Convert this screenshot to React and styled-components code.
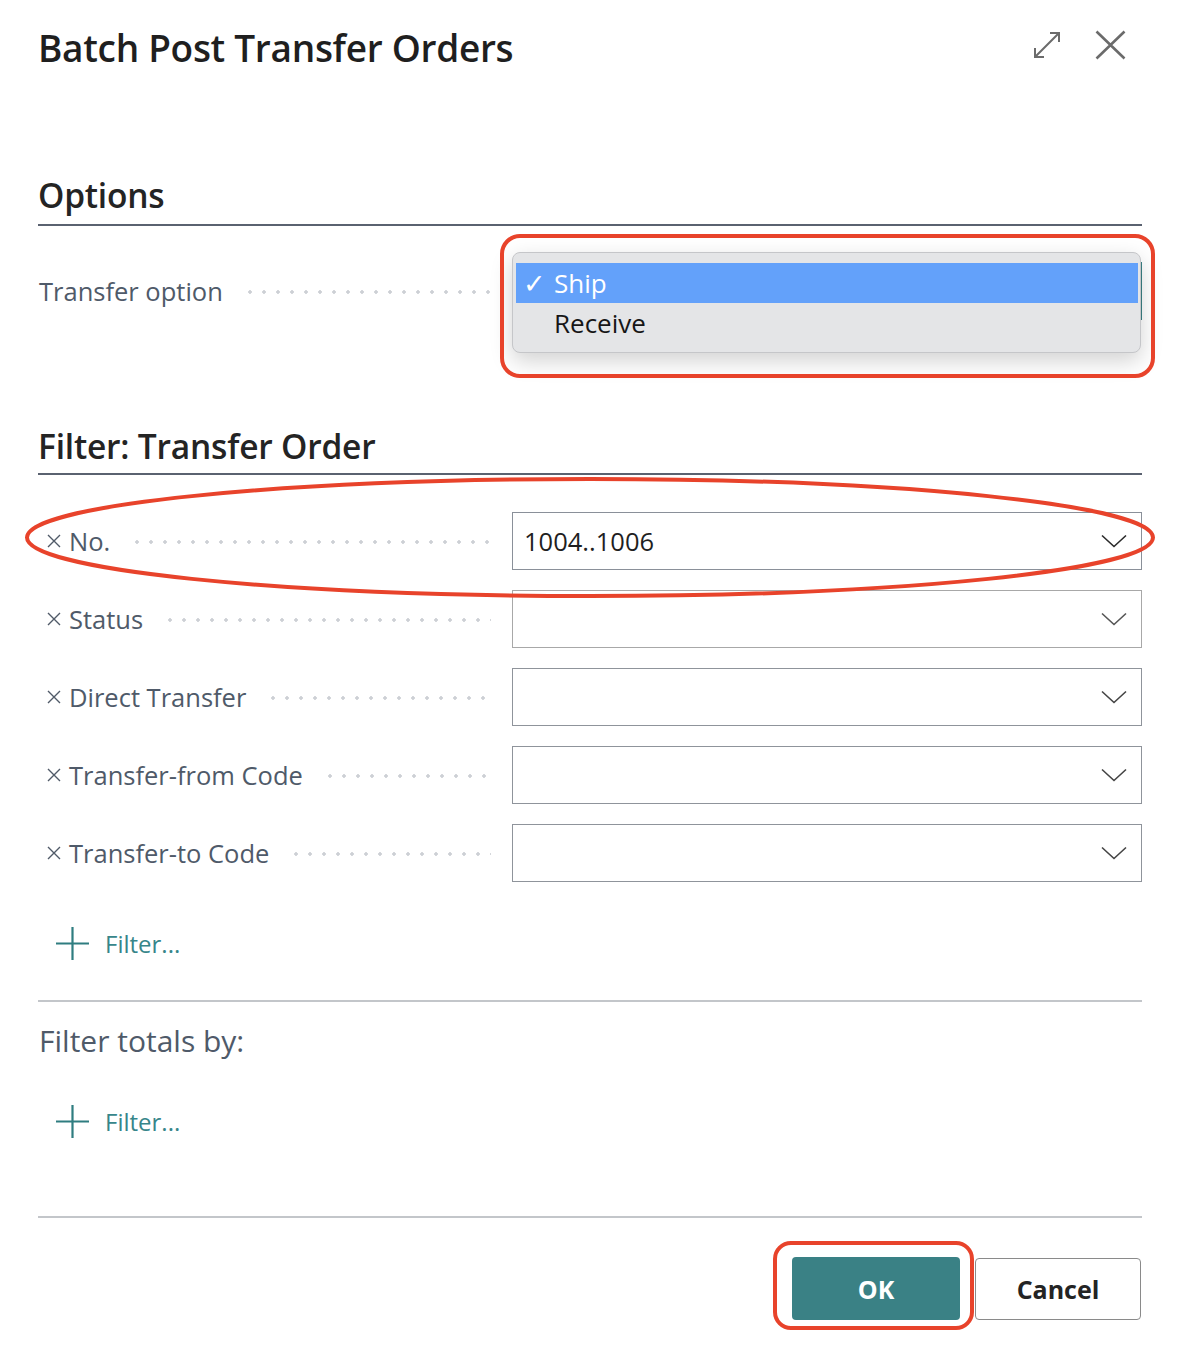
import React from "react";
import styled, { createGlobalStyle } from "styled-components";

const GlobalStyle = createGlobalStyle`
  html, body {
    margin: 0;
    padding: 0;
    background: #ffffff;
  }
  body {
    font-family: "Open Sans", "Noto Sans", sans-serif;
    color: #242424;
  }
  * {
    box-sizing: border-box;
  }
`;

const Dialog = styled.div`
  position: relative;
  width: 1184px;
  height: 1360px;
  padding: 0 42px 0 38px;
  display: flex;
  flex-direction: column;
`;

const Header = styled.header`
  height: 96px;
  display: flex;
  align-items: flex-start;
  justify-content: space-between;
`;

const Title = styled.h1`
  margin: 24px 0 0 0;
  font-size: 37px;
  line-height: 48px;
  font-weight: 600;
  color: #1f1f1f;
  letter-spacing: -0.3px;
`;

const HeaderActions = styled.div`
  display: flex;
  align-items: center;
  gap: 34px;
  margin: 30px 16px 0 0;
  color: #6b6b6b;
`;

const IconButton = styled.button`
  border: 0;
  background: none;
  padding: 0;
  display: flex;
  color: inherit;
`;

const SectionTitle = styled.h2`
  margin: ${(p) => p.$gap}px 0 0;
  height: ${(p) => 48 + p.$pad + 2}px;
  padding: 0 0 ${(p) => p.$pad}px 0;
  font-size: 33.5px;
  line-height: 48px;
  font-weight: 600;
  color: #242424;
  letter-spacing: -0.2px;
  border-bottom: 2px solid #5a6270;
`;

const FieldRow = styled.div`
  position: relative;
  display: grid;
  grid-template-columns: 453px 630px;
  column-gap: 21px;
  align-items: center;
  height: 58px;
  margin-top: ${(p) => p.$gap}px;
`;

const LabelCell = styled.div`
  display: flex;
  align-items: center;
  height: 100%;
  padding-left: ${(p) => (p.$removable ? 8 : 1)}px;
`;

const RemoveMark = styled.span`
  display: flex;
  width: 16px;
  margin-right: 7px;
  color: #505a68;
`;

const Label = styled.span`
  font-size: 25.5px;
  color: #4f5a69;
  white-space: nowrap;
`;

const Leader = styled.span`
  flex: 1;
  height: 6px;
  margin: 2px 0 0 20px;
  background-image: radial-gradient(circle, #cdd0d5 1.5px, transparent 2px);
  background-size: 14px 6px;
  background-repeat: repeat-x;
  background-position: left center;
`;

const SelectBox = styled.div`
  position: relative;
  height: 58px;
  display: flex;
  align-items: center;
  justify-content: space-between;
  padding: 0 14px 0 11px;
  border: ${(p) => (p.$active ? "2px solid #3a8185" : `1.5px solid ${p.$border || "#9a9fa6"}`)};
  background: #fff;
  font-size: 25.5px;
  color: #1f1f1f;
`;

const Chevron = styled.svg`
  flex: none;
  color: ${(p) => p.$color || "#3a3a3a"};
`;

const Popup = styled.div`
  position: absolute;
  top: -12px;
  left: -2px;
  width: 629px;
  height: 101px;
  padding: 10px 2px 0 3px;
  background: #e4e5e7;
  border: 1px solid #c5c6c9;
  border-radius: 8px;
  box-shadow: 0 8px 22px rgba(0, 0, 0, 0.18);
`;

const PopupItem = styled.div`
  height: 40px;
  display: flex;
  align-items: center;
  background: ${(p) => (p.$selected ? "#63a1fa" : "transparent")};
  color: ${(p) => (p.$selected ? "#ffffff" : "#161616")};
  font-size: 26px;
`;

const Check = styled.span`
  width: 38px;
  padding-left: 7px;
  font-family: "DejaVu Sans", sans-serif;
  font-size: 27px;
  line-height: 1;
`;

const AddFilter = styled.button`
  display: flex;
  align-items: center;
  gap: 16px;
  height: 40px;
  margin-top: ${(p) => p.$gap}px;
  padding: 0 0 0 18px;
  border: 0;
  background: none;
  font-family: inherit;
  font-size: 24px;
  color: #37868a;
  align-self: flex-start;
`;

const Divider = styled.hr`
  margin: ${(p) => p.$gap}px 0 0;
  border: 0;
  height: 2px;
  background: #c3c6ca;
`;

const SubTitle = styled.div`
  margin-top: 19px;
  height: 40px;
  line-height: 40px;
  padding-left: 1px;
  font-size: 30px;
  color: #4f5a69;
`;

const Footer = styled.div`
  display: flex;
  justify-content: flex-end;
  align-items: flex-start;
  gap: 15px;
  margin-top: 39px;
  padding-right: 1px;
`;

const ActionWrap = styled.div`
  position: relative;
`;

const Button = styled.button`
  width: ${(p) => (p.$primary ? 168 : 166)}px;
  height: ${(p) => (p.$primary ? 63 : 62)}px;
  border-radius: 4px;
  border: ${(p) => (p.$primary ? "0" : "1.5px solid #8a8a8a")};
  background: ${(p) => (p.$primary ? "#3a8185" : "#ffffff")};
  color: ${(p) => (p.$primary ? "#ffffff" : "#242424")};
  font-family: inherit;
  font-weight: 700;
  font-size: 25px;
  margin-top: ${(p) => (p.$primary ? 0 : 1)}px;
`;

/* red callouts drawn over the screenshot */
const CalloutBox = styled.div`
  position: absolute;
  z-index: 3;
  left: ${(p) => p.$x}px;
  top: ${(p) => p.$y}px;
  width: ${(p) => p.$w}px;
  height: ${(p) => p.$h}px;
  border: 4px solid #e8432b;
  border-radius: ${(p) => p.$r}px;
  pointer-events: none;
`;

const CalloutEllipse = styled.svg`
  position: absolute;
  z-index: 3;
  left: -13px;
  top: -35px;
  overflow: visible;
  pointer-events: none;
`;

const ChevronIcon = ({ color }) => (
  <Chevron $color={color} width="26" height="14" viewBox="0 0 26 14">
    <path d="M1 1.5 L13 12.5 L25 1.5" fill="none" stroke="currentColor" strokeWidth="1.6" />
  </Chevron>
);

const XMark = () => (
  <svg width="16" height="16" viewBox="0 0 16 16">
    <path d="M2 2 L14 14 M14 2 L2 14" stroke="currentColor" strokeWidth="1.4" />
  </svg>
);

const PlusIcon = () => (
  <svg width="33" height="33" viewBox="0 0 33 33">
    <path d="M16.5 0 V33 M0 16.5 H33" stroke="#2f7d80" strokeWidth="2.2" />
  </svg>
);

const filters = [
  { label: "No.", value: "1004..1006", border: "#8a9099", chevron: "#2a2a2a" },
  { label: "Status", value: "", border: "#a8a8a8", chevron: "#555" },
  { label: "Direct Transfer", value: "", border: "#8f949b", chevron: "#444" },
  { label: "Transfer-from Code", value: "", border: "#8f949b", chevron: "#444" },
  { label: "Transfer-to Code", value: "", border: "#8f949b", chevron: "#444" },
];

export default function App() {
  return (
    <>
      <GlobalStyle />
      <Dialog>
        <Header>
          <Title>Batch Post Transfer Orders</Title>
          <HeaderActions>
            <IconButton aria-label="Expand">
              <svg width="28" height="28" viewBox="0 0 28 28">
                <path
                  d="M2 26 L26 2 M17 2 H26 V11 M2 17 V26 H11"
                  fill="none"
                  stroke="currentColor"
                  strokeWidth="2"
                />
              </svg>
            </IconButton>
            <IconButton aria-label="Close">
              <svg width="31" height="30" viewBox="0 0 31 30">
                <path
                  d="M1.5 1.5 L29.5 28.5 M29.5 1.5 L1.5 28.5"
                  stroke="currentColor"
                  strokeWidth="2.6"
                />
              </svg>
            </IconButton>
          </HeaderActions>
        </Header>

        <SectionTitle $gap={75} $pad={5}>Options</SectionTitle>

        <FieldRow $gap={36}>
          <LabelCell>
            <Label>Transfer option</Label>
            <Leader />
          </LabelCell>
          <SelectBox $active>
            <Popup>
              <PopupItem $selected>
                <Check>✓</Check>
                Ship
              </PopupItem>
              <PopupItem>
                <Check />
                Receive
              </PopupItem>
            </Popup>
            <CalloutBox $x={-14} $y={-30} $w={655} $h={144} $r={20} />
          </SelectBox>
        </FieldRow>

        <SectionTitle $gap={102} $pad={3}>Filter: Transfer Order</SectionTitle>

        {filters.map((f, i) => (
          <FieldRow key={f.label} $gap={i === 0 ? 37 : 20}>
            <LabelCell $removable>
              <RemoveMark>
                <XMark />
              </RemoveMark>
              <Label>{f.label}</Label>
              <Leader />
            </LabelCell>
            <SelectBox $border={f.border}>
              <span>{f.value}</span>
              <ChevronIcon color={f.chevron} />
            </SelectBox>
            {i === 0 && (
              <CalloutEllipse width="1130" height="121" viewBox="0 0 1130 121">
                <ellipse cx="565" cy="60.5" rx="563" ry="58.5" fill="none" stroke="#e8432b" strokeWidth="4" />
              </CalloutEllipse>
            )}
          </FieldRow>
        ))}

        <AddFilter $gap={41}>
          <PlusIcon />
          Filter...
        </AddFilter>

        <Divider $gap={37} />

        <SubTitle>Filter totals by:</SubTitle>

        <AddFilter $gap={40}>
          <PlusIcon />
          Filter...
        </AddFilter>

        <Divider $gap={75} />

        <Footer>
          <ActionWrap>
            <Button $primary>OK</Button>
            <CalloutBox $x={-19} $y={-16} $w={201} $h={89} $r={18} />
          </ActionWrap>
          <Button>Cancel</Button>
        </Footer>
      </Dialog>
    </>
  );
}
